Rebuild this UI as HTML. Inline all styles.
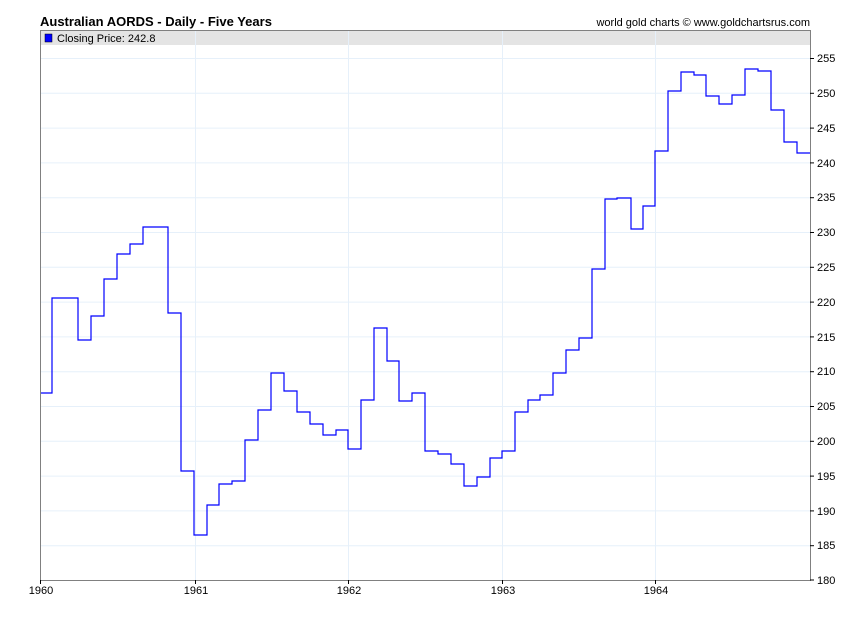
<!DOCTYPE html>
<html><head><style>
body{margin:0;background:#fff;width:850px;height:616px;overflow:hidden;font-family:"Liberation Sans",Arial,sans-serif}
</style></head><body>
<svg width="850" height="616" xmlns="http://www.w3.org/2000/svg" font-family="Liberation Sans, Arial, sans-serif">
<text x="40" y="26" font-size="13" font-weight="bold" fill="#000">Australian AORDS - Daily - Five Years</text>
<text x="810" y="26" font-size="11" fill="#000" text-anchor="end">world gold charts © www.goldchartsrus.com</text>
<rect x="40.5" y="30.5" width="770" height="550" fill="#fff"/>
<rect x="41" y="31" width="769" height="14" fill="#e4e4e4"/>
<g stroke="#e6f0fa" stroke-width="1">
<line x1="41" y1="58.5" x2="810" y2="58.5"/>
<line x1="41" y1="93.3" x2="810" y2="93.3"/>
<line x1="41" y1="128.1" x2="810" y2="128.1"/>
<line x1="41" y1="162.9" x2="810" y2="162.9"/>
<line x1="41" y1="197.7" x2="810" y2="197.7"/>
<line x1="41" y1="232.5" x2="810" y2="232.5"/>
<line x1="41" y1="267.3" x2="810" y2="267.3"/>
<line x1="41" y1="302.1" x2="810" y2="302.1"/>
<line x1="41" y1="336.9" x2="810" y2="336.9"/>
<line x1="41" y1="371.7" x2="810" y2="371.7"/>
<line x1="41" y1="406.5" x2="810" y2="406.5"/>
<line x1="41" y1="441.3" x2="810" y2="441.3"/>
<line x1="41" y1="476.1" x2="810" y2="476.1"/>
<line x1="41" y1="510.9" x2="810" y2="510.9"/>
<line x1="41" y1="545.7" x2="810" y2="545.7"/>
<line x1="195.5" y1="31" x2="195.5" y2="580"/>
<line x1="348.5" y1="31" x2="348.5" y2="580"/>
<line x1="502.5" y1="31" x2="502.5" y2="580"/>
<line x1="655.5" y1="31" x2="655.5" y2="580"/>
</g>
<polyline fill="none" stroke="#0000ff" stroke-width="1.2" points="40,393 52,393 52,298 78,298 78,340 91,340 91,316 104,316 104,279 117,279 117,254 130,254 130,244 143,244 143,227 168,227 168,313 181,313 181,471 194,471 194,535 207,535 207,505 219,505 219,484 232,484 232,481 245,481 245,440 258,440 258,410 271,410 271,373 284,373 284,391 297,391 297,412 310,412 310,424 323,424 323,435 336,435 336,430 348,430 348,449 361,449 361,400 374,400 374,328 387,328 387,361 399,361 399,401 412,401 412,393 425,393 425,451 438,451 438,454 451,454 451,464 464,464 464,486 477,486 477,477 490,477 490,458 502,458 502,451 515,451 515,412 528,412 528,400 540,400 540,395 553,395 553,373 566,373 566,350 579,350 579,338 592,338 592,269 605,269 605,199 617,199 617,198 631,198 631,229 643,229 643,206 655,206 655,151 668,151 668,91 681,91 681,72 694,72 694,75 706,75 706,96 719,96 719,104 732,104 732,95 745,95 745,69 758,69 758,71 771,71 771,110 784,110 784,142 797,142 797,153 810,153"/>
<rect x="40.5" y="30.5" width="770" height="550" fill="none" stroke="#808080" stroke-width="1"/>
<rect x="45" y="34" width="7" height="8" fill="#0000ff" stroke="#000" stroke-width="0.5"/>
<text x="57" y="42" font-size="11" fill="#000">Closing Price: 242.8</text>
<g stroke="#000" stroke-width="1">
<line x1="810" y1="58.5" x2="814" y2="58.5"/><line x1="810" y1="93.3" x2="814" y2="93.3"/><line x1="810" y1="128.1" x2="814" y2="128.1"/><line x1="810" y1="162.9" x2="814" y2="162.9"/><line x1="810" y1="197.7" x2="814" y2="197.7"/><line x1="810" y1="232.5" x2="814" y2="232.5"/><line x1="810" y1="267.3" x2="814" y2="267.3"/><line x1="810" y1="302.1" x2="814" y2="302.1"/><line x1="810" y1="336.9" x2="814" y2="336.9"/><line x1="810" y1="371.7" x2="814" y2="371.7"/><line x1="810" y1="406.5" x2="814" y2="406.5"/><line x1="810" y1="441.3" x2="814" y2="441.3"/><line x1="810" y1="476.1" x2="814" y2="476.1"/><line x1="810" y1="510.9" x2="814" y2="510.9"/><line x1="810" y1="545.7" x2="814" y2="545.7"/><line x1="810" y1="580" x2="814" y2="580"/>
<line x1="40.5" y1="580" x2="40.5" y2="584"/><line x1="195.5" y1="580" x2="195.5" y2="584"/><line x1="348.5" y1="580" x2="348.5" y2="584"/><line x1="502.5" y1="580" x2="502.5" y2="584"/><line x1="655.5" y1="580" x2="655.5" y2="584"/>
</g>
<g font-size="11" fill="#000">
<text x="817" y="62">255</text><text x="817" y="97">250</text><text x="817" y="132">245</text><text x="817" y="167">240</text><text x="817" y="201">235</text><text x="817" y="236">230</text><text x="817" y="271">225</text><text x="817" y="306">220</text><text x="817" y="341">215</text><text x="817" y="375">210</text><text x="817" y="410">205</text><text x="817" y="445">200</text><text x="817" y="480">195</text><text x="817" y="515">190</text><text x="817" y="549">185</text><text x="817" y="584">180</text>
<text x="41" y="594" text-anchor="middle">1960</text><text x="196" y="594" text-anchor="middle">1961</text><text x="349" y="594" text-anchor="middle">1962</text><text x="503" y="594" text-anchor="middle">1963</text><text x="656" y="594" text-anchor="middle">1964</text>
</g>
</svg>
</body></html>
